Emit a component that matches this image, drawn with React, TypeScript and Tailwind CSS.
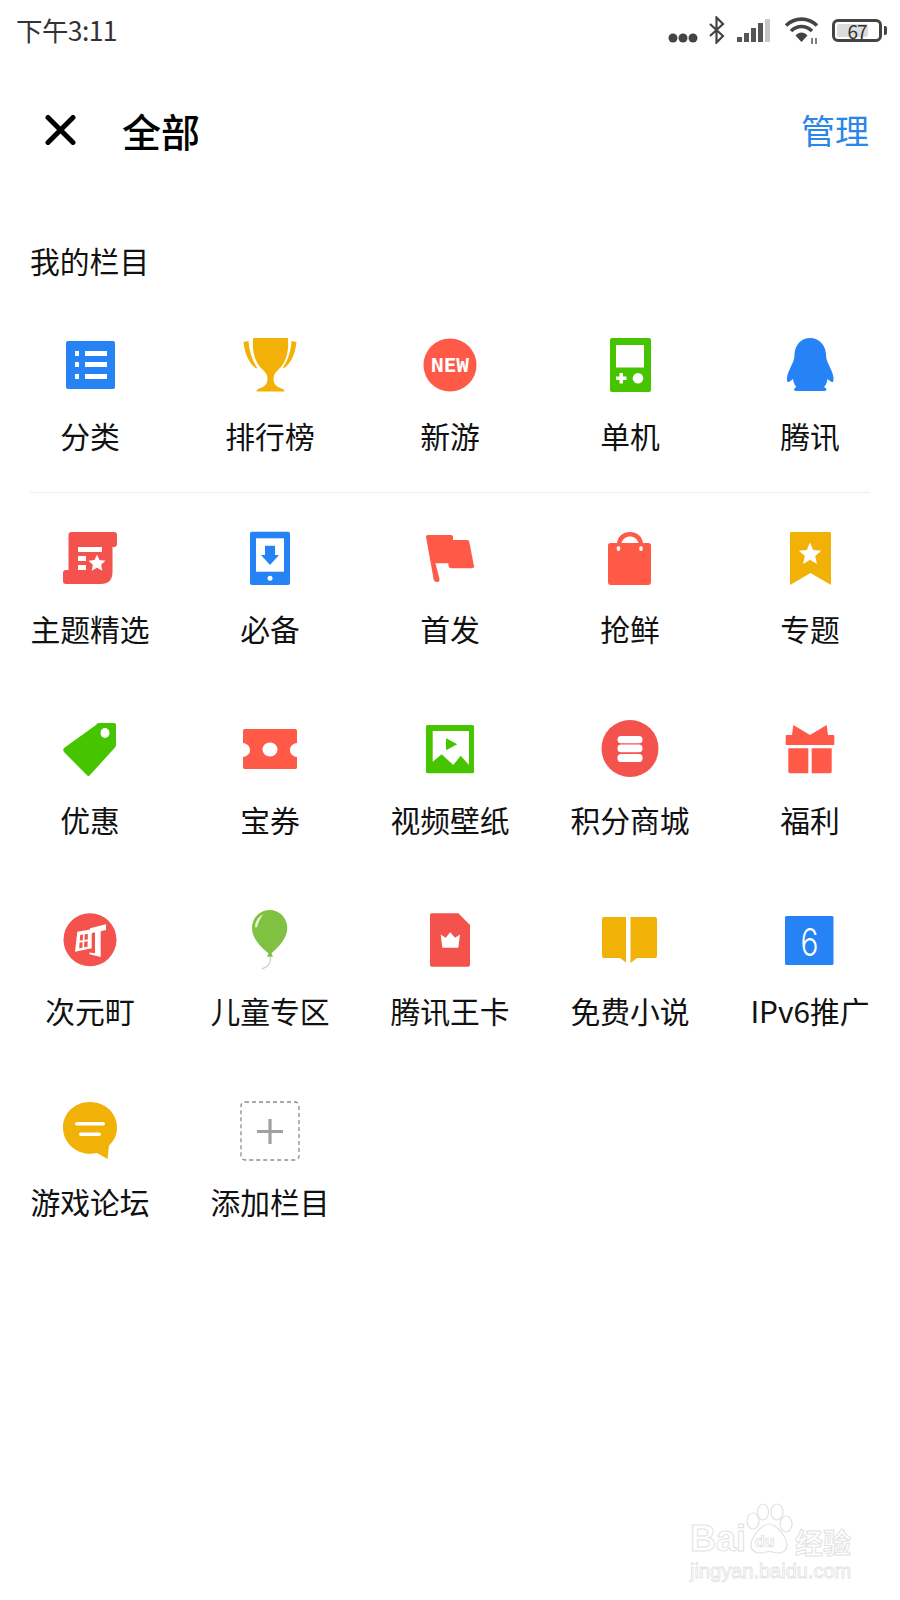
import React from "react";

const BLUE = "#2583f5";
const RED = "#ff5a47";
const RED2 = "#f4524d";
const GREEN = "#46c400";
const YELLOW = "#f2b106";

const Svg = ({ children }: { children: React.ReactNode }) => (
  <svg width="60" height="60" viewBox="0 0 60 60" className="block shrink-0">
    {children}
  </svg>
);

const icons: Record<string, React.ReactNode> = {
  list: (
    <Svg>
      <rect x="6" y="6" width="49" height="48" rx="2" fill={BLUE} />
      <g fill="#fff">
        <rect x="15" y="16" width="4" height="5" />
        <rect x="25" y="16" width="22" height="5" />
        <rect x="15" y="27" width="4" height="5" />
        <rect x="25" y="27" width="22" height="5" />
        <rect x="15" y="39" width="4" height="5" />
        <rect x="25" y="39" width="22" height="5" />
      </g>
    </Svg>
  ),
  trophy: (
    <Svg>
      <g fill={YELLOW} transform="translate(-.5 0)">
        <path d="M15 3h31c.8 0 1 .5 1 1 1 13-2 24-10 31-3.500 3-4.500 6-4.500 9 0 5 3 7.500 8 9.500 2 .8 3 1.500 3 3H15.500c0-1.500 1-2.200 3-3 5-2 8-4.500 8-9.500 0-3-1-6-4.500-9-8-7-11-18-10-31 0-.5.500-1 1-1z" transform="translate(1.500 0)" />
        <path d="M4 7l5-1c.5 10 3.500 19 8.500 26.500l-.5 1C9.500 29 5 18 4 7z" />
        <path d="M57 7l-5-1c-.5 10-3.500 19-8.500 26.500l.5 1C51.500 29 56 18 57 7z" />
      </g>
    </Svg>
  ),
  new: (
    <Svg>
      <circle cx="30" cy="30" r="26.500" fill={RED} />
      <text x="30" y="37" textAnchor="middle" fill="#fff" fontSize="19" fontWeight="700" textLength="38" lengthAdjust="spacingAndGlyphs" fontFamily="'DejaVu Sans Mono', monospace">NEW</text>
    </Svg>
  ),
  game: (
    <Svg>
      <rect x="10" y="3" width="41" height="54" rx="2" fill={GREEN} />
      <rect x="16" y="10" width="28" height="22.500" fill="#fff" />
      <path d="M19.500 38h3.500v3.500h3.500V45H23v3.500h-3.500V45H16v-3.500h3.500z" fill="#fff" />
      <circle cx="38" cy="43.300" r="5.300" fill="#fff" />
    </Svg>
  ),
  penguin: (
    <Svg>
      <path transform="translate(-2 0)" d="M32 3c9 0 15.500 7 16 16 .2 3.500.5 5.500 1.500 8 1.500 3.500 4 8 5.500 13 .6 2 .8 5 .2 6.500-1 1.500-3.500-.5-5.700-2.500-.5 3.500-1.500 6-3.500 8 1 .5 2.500 1.500 2.500 2.500 0 1.200-1.500 1.500-4 1.500H20c-2.500 0-4-.3-4-1.500 0-1 1.500-2 2.500-2.500-2-2-3-4.500-3.500-8-2.200 2-4.700 4-5.700 2.500-.6-1.500-.4-4.500.2-6.500 1.500-5 4-9.500 5.500-13 1-2.500 1.300-4.500 1.500-8C17 10 23 3 32 3z" fill={BLUE} />
    </Svg>
  ),
  scroll: (
    <Svg>
      <path d="M8.500 7q0-3 3-3H54q3 0 3 3v9q0 3-3 3h-1.500v25q0 12-12 12H6q-3 0-3-3v-8q0-3 3-3h2.500z" fill={RED2} />
      <g fill="#fff">
        <rect x="18" y="19" width="24" height="5" />
        <rect x="18" y="28" width="8" height="5" />
        <rect x="18" y="37" width="8" height="5" />
        <path d="M37 26.500l2.500 5.500 6 .7-4.400 4 1.200 6-5.300-3-5.300 3 1.200-6-4.400-4 6-.7z" />
      </g>
    </Svg>
  ),
  phone: (
    <Svg>
      <rect x="10" y="3.700" width="40" height="53.300" rx="2" fill={BLUE} />
      <rect x="16" y="10.300" width="28" height="33.400" fill="#fff" />
      <path d="M25 17.700h10V27h4l-9 10-9-10h4z" fill={BLUE} />
      <circle cx="30" cy="50.300" r="2.500" fill="#fff" />
    </Svg>
  ),
  flag: (
    <Svg>
      <path d="M6 9q0-2 2-2h23q2 0 2 2v3h14q2 0 2.300 2L54 38q.3 2.300-2 2.300H31q-2 0-2.300-2l-.4-3H15.500l4 15.700q.5 3-2.500 3-2.800 0-3.300-2.500z" fill={RED} />
    </Svg>
  ),
  bag: (
    <Svg>
      <path fillRule="evenodd" d="M8 17.500Q8 15 10.500 15H17c1-7 6-11 13-11s12 4 13 11h5.500q2.500 0 2.500 2.500V54q0 3-3 3H11q-3 0-3-3zM21.500 15h17c-1-4-4.500-6.500-8.500-6.500s-7.500 2.500-8.500 6.500z" fill={RED} />
      <ellipse cx="18.500" cy="20.500" rx="1.800" ry="2.500" fill="#fff" />
      <ellipse cx="41" cy="20.500" rx="1.800" ry="2.500" fill="#fff" />
    </Svg>
  ),
  ribbon: (
    <Svg>
      <path d="M10 5.500c0-1 .5-1.500 1.500-1.500h38c1 0 1.500.5 1.500 1.500V57L30.500 45 10 57z" fill={YELLOW} />
      <path d="M30 14.500l3.200 7.500 8 .7-6 5.300 1.800 8-7-4.300-7 4.300 1.800-8-6-5.300 8-.7z" fill="#fff" />
    </Svg>
  ),
  tag: (
    <Svg>
      <path d="M36 6c.7-1.300 1.600-2 3-2h15c1.300 0 2 .7 2 2v19c0 1.500-.3 2.500-1 3.500L30 56c-.8 1.200-2.400 1.200-3.200 0L4 33c-1-1.200-1-2.800 0-4z" fill={GREEN} />
      <ellipse cx="45" cy="14" rx="4.500" ry="5" fill="#fff" />
    </Svg>
  ),
  ticket: (
    <Svg>
      <path d="M3 12c0-1.500 1-2 2-2h50c1.500 0 2 .5 2 2v12c-4 .5-7 3-7 7s3 6.500 7 7v10c0 1.500-.5 2-2 2H5c-1 0-2-.5-2-2V38c4-.5 7-3 7-7s-3-6.500-7-7z" fill={RED} />
      <ellipse cx="30" cy="30.500" rx="7.500" ry="7" fill="#fff" />
    </Svg>
  ),
  picture: (
    <Svg>
      <rect x="6" y="6" width="48" height="48.300" rx="1.500" fill={GREEN} />
      <path d="M12.700 12H49v34l-8.300-9.300L33.300 46l-11.600-10.700-9 7.400z" fill="#fff" />
      <path d="M26 19.300l11.300 6L26 31.300z" fill={GREEN} />
    </Svg>
  ),
  coins: (
    <Svg>
      <circle cx="30" cy="29.500" r="28.500" fill={RED2} />
      <g fill="#fff">
        <rect x="17.500" y="17" width="25" height="7.300" rx="3.600" />
        <rect x="17.500" y="25.500" width="25" height="7.800" rx="3.600" />
        <rect x="17.500" y="35" width="25" height="8" rx="3.600" />
      </g>
    </Svg>
  ),
  gift: (
    <Svg>
      <path d="M13.300 6L30 16 46.700 6l1.300 10h5c.8 0 1.300.5 1.300 1.300V26H5.700v-8.700c0-.8.5-1.300 1.300-1.300h5z" fill={RED} />
      <path d="M8.300 29.300h20v25H10c-1 0-1.700-.7-1.700-1.700z" fill={RED} />
      <path d="M31.700 29.300h20v23.300c0 1-.7 1.700-1.700 1.700H31.700z" fill={RED} />
    </Svg>
  ),
  cho: (
    <Svg>
      <circle cx="30" cy="29.700" r="26.500" fill={RED2} />
      <g fill="#fff">
        <path fillRule="evenodd" d="M17.300 21.700l14.400-2.400v19L15 41.700zM20.200 25l-.4 5.500 3-.3.300-5.600zM24.700 24.300l-.2 5.700 3.300-.4v-5.800zM19.600 32.500l-.4 5.800 3.200-.6.200-5.500zM24.300 31.800l-.2 5.500 3.500-.6V31.300z" />
        <path d="M30 18.300l16-4v5.700l-5.300 1.300V47l-11.200-2.700v-1.800l5.500.7V22.300L30 23.500z" />
      </g>
    </Svg>
  ),
  balloon: (
    <Svg>
      <path d="M30 46c1 4 .5 7-2 9.500-1.500 1.500-4 2.500-6 3.500" stroke="#cfcfcf" strokeWidth="1.300" fill="none" />
      <path d="M29.700 0C39.500 0 47.300 8 47.300 18c0 10-8.500 19-15.800 25.300l1.500 3.400h-6l1.500-3.400C20.500 37 12 28 12 18 12 8 20 0 29.700 0z" fill="#7fc242" />
      <path d="M15 16.500c.5-5.500 3.500-10 8.300-12.200-2.800 3.500-4.800 7.500-6 12.200-.4 1.300-2.400 1.300-2.300 0z" fill="#e2f2d4" />
    </Svg>
  ),
  sim: (
    <Svg>
      <path d="M10 5.300c0-1.300.7-2 2-2h26.300L50 15v39.700c0 1.300-.7 2-2 2H12c-1.300 0-2-.7-2-2z" fill={RED2} />
      <path d="M20.700 24.500l5 3.300 4.500-5.500 4.800 5.500 5-3.300-1.700 13.200H22.300z" fill="#fff" />
    </Svg>
  ),
  book: (
    <Svg>
      <path d="M2 9q0-2 2-2h22v45.500L20 48H4q-2 0-2-2z" fill={YELLOW} />
      <path d="M30.500 7H55q2 0 2 2v37q0 2-2 2H37l-6.500 5z" fill={YELLOW} />
    </Svg>
  ),
  six: (
    <Svg>
      <rect x="5" y="6" width="48.500" height="49" rx="1.500" fill={BLUE} />
      <text x="29.500" y="46" textAnchor="middle" fill="#fff" fontSize="38" fontWeight="300" textLength="18" lengthAdjust="spacingAndGlyphs" fontFamily="Inter, 'Liberation Sans', sans-serif">6</text>
    </Svg>
  ),
  chat: (
    <Svg>
      <path d="M30 1c15 0 27 11 27 25.500 0 7.500-3 13.500-8 18L47.500 58 37 52c-2.200.5-4.500.8-7 .8C15 52.800 3 41 3 26.500S15 1 30 1z" fill={YELLOW} />
      <rect x="15" y="21" width="30" height="3.600" rx="1.800" fill="#fff" />
      <rect x="19" y="31.500" width="22" height="3.600" rx="1.800" fill="#fff" />
    </Svg>
  ),
  add: (
    <Svg>
      <rect x="1" y="1" width="58" height="58" rx="4" fill="none" stroke="#8c8c8c" strokeWidth="1.300" strokeDasharray="4 3" />
      <path d="M17 30.500h26M30 18v25" stroke="#a0a0a0" strokeWidth="3.200" fill="none" />
    </Svg>
  ),
};

const Cell = ({ icon, label }: { icon: string; label: string }) => (
  <div className="flex flex-col items-center">
    {icons[icon]}
    <div className="mt-[25px] h-[30px] text-[29.800px] leading-[30px] whitespace-nowrap text-[#111]">{label}</div>
  </div>
);

const first: [string, string][] = [
  ["list", "分类"],
  ["trophy", "排行榜"],
  ["new", "新游"],
  ["game", "单机"],
  ["penguin", "腾讯"],
];

const rest: [string, string][] = [
  ["scroll", "主题精选"],
  ["phone", "必备"],
  ["flag", "首发"],
  ["bag", "抢鲜"],
  ["ribbon", "专题"],
  ["tag", "优惠"],
  ["ticket", "宝券"],
  ["picture", "视频壁纸"],
  ["coins", "积分商城"],
  ["gift", "福利"],
  ["cho", "次元町"],
  ["balloon", "儿童专区"],
  ["sim", "腾讯王卡"],
  ["book", "免费小说"],
  ["six", "IPv6推广"],
  ["chat", "游戏论坛"],
  ["add", "添加栏目"],
];

const StatusIcons = () => (
  <div className="flex items-center">
    <svg width="30" height="10" viewBox="0 0 30 10" className="block mt-[15px] mr-[10px]">
      <g fill="#444">
        <circle cx="5" cy="5" r="4.500" />
        <circle cx="15" cy="5" r="4.500" />
        <circle cx="25" cy="5" r="4.500" />
      </g>
    </svg>
    <svg width="18" height="28" viewBox="0 0 18 28" className="block mr-[10px]">
      <path d="M2 8l13 12-6.500 6.500V1.500L15 8 2 20" fill="none" stroke="#444" strokeWidth="2.200" />
    </svg>
    <svg width="35" height="25" viewBox="0 0 35 25" className="block mr-[13px]">
      <rect x="1" y="19" width="5" height="5" fill="#555" />
      <rect x="8" y="15" width="5" height="9" fill="#555" />
      <rect x="15" y="10" width="5" height="14" fill="#555" />
      <rect x="22" y="5" width="5" height="19" fill="#555" />
      <rect x="29" y="1" width="5" height="23" fill="#c8c8c8" />
    </svg>
    <svg width="36" height="28" viewBox="0 0 36 28" className="block mr-[12px]">
      <g fill="none" stroke="#444" strokeWidth="3.600">
        <path d="M2 9.500c9-8.500 22-8.500 31 0" />
        <path d="M7 15c6.500-6 14.500-6 21 0" />
      </g>
      <path d="M11.500 19.500c3.500-4 8.500-4 12 0L17.500 26z" fill="#444" />
      <path d="M28 22v6M32 22v6" stroke="#555" strokeWidth="1.500" />
    </svg>
    <div className="flex items-center">
      <div className="relative flex h-[23px] w-[50px] items-center justify-center rounded-[6px] border-[3px] border-[#444]">
        <div className="absolute left-[2px] top-[2px] bottom-[2px] w-[31px] rounded-[2px] bg-[#dcdcdc]" />
        <span className="relative text-[19px] leading-none tracking-[-1px] text-[#333]">67</span>
      </div>
      <div className="ml-[2px] h-[9px] w-[3px] rounded-r-[2px] bg-[#444]" />
    </div>
  </div>
);

const Watermark = () => (
  <div className="absolute left-[690px] top-[1503px] h-[80px] w-[165px] font-['Liberation_Sans',sans-serif] text-white">
    <div className="absolute left-0 top-[20px] text-[36px] leading-[32px] font-bold [-webkit-text-stroke:1px_#e2e2e2]">Bai</div>
    <svg width="52" height="52" viewBox="0 0 50 52" className="absolute left-[53px] top-0">
      <g fill="#fff" stroke="#e2e2e2" strokeWidth="1.200">
        <ellipse cx="9" cy="18" rx="6" ry="8" />
        <ellipse cx="19" cy="9" rx="5.500" ry="8" />
        <ellipse cx="33" cy="9" rx="6" ry="8" />
        <ellipse cx="42" cy="21" rx="6" ry="8" />
        <path d="M25 21c8 0 18 14 18 21 0 6-5 8-9 8-3 0-6-1.500-9-1.500S19 50 16 50c-4 0-9-2-9-8 0-7 10-21 18-21z" />
      </g>
    </svg>
    <div className="absolute left-[65px] top-[31px] text-[16px] leading-[16px] font-bold text-white [-webkit-text-stroke:.7px_#dcdcdc]">du</div>
    <div className="absolute left-[105px] top-[24px] text-[28px] leading-[30px] font-bold font-['Noto_Sans_CJK_SC',sans-serif] whitespace-nowrap [-webkit-text-stroke:1px_#e2e2e2]">经验</div>
    <div className="absolute left-0 top-[57px] text-[20px] leading-[22px] whitespace-nowrap [-webkit-text-stroke:.8px_#e2e2e2]">jingyan.baidu.com</div>
  </div>
);

export default function App() {
  return (
    <div className="relative h-[1600px] w-[900px] overflow-hidden bg-white font-['Noto_Sans_CJK_SC','Noto_Sans',sans-serif] text-[#111]">
      <div className="flex h-[60px] items-start justify-between pl-[16px] pr-[13px] pt-[12px]">
        <div className="text-[26.500px] leading-[36px] tracking-[-.6px] text-[#333]">下午3:11</div>
        <div className="pt-[4px]">
          <StatusIcons />
        </div>
      </div>

      <div className="mt-[40px] flex h-[60px] items-center justify-between pl-[45px] pr-[31px]">
        <div className="flex items-center">
          <svg width="31" height="30" viewBox="0 0 31 30" className="block">
            <path d="M3 2.500l25 25M28 2.500l-25 25" stroke="#000" strokeWidth="5" strokeLinecap="round" fill="none" />
          </svg>
          <div className="ml-[46px] text-[39px] leading-[60px] font-medium text-black">全部</div>
        </div>
        <div className="text-[34px] leading-[60px] text-[#2a86e8]">管理</div>
      </div>

      <div className="mt-[85px] pl-[30px] text-[29.800px] leading-[30px] text-[#111]">我的栏目</div>

      <div className="mt-[60px] grid grid-cols-5">
        {first.map(([i, l]) => (
          <Cell key={l} icon={i} label={l} />
        ))}
      </div>

      <div className="mx-[30px] mt-[42px] h-px bg-[#ededed]" />

      <div className="mt-[35px] grid grid-cols-5 gap-y-[76px]">
        {rest.map(([i, l]) => (
          <Cell key={l} icon={i} label={l} />
        ))}
      </div>

      <Watermark />
    </div>
  );
}
